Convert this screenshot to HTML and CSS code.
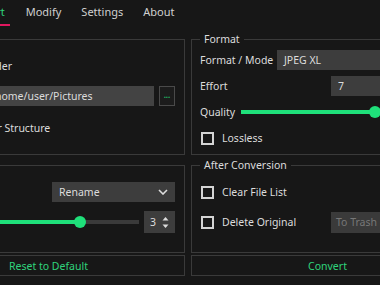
FILE: index.html
```html
<!DOCTYPE html>
<html lang="en">
<head>
    <meta charset="UTF-8">
    <meta name="viewport" content="width=device-width, initial-scale=1.0">
    <title>XL Converter</title>
    <link rel="stylesheet" href="styles.css">
</head>
<body>
    <div class="window">
        <nav class="tabs">
            <span class="tab active">Convert</span>
            <span class="tab">Modify</span>
            <span class="tab">Settings</span>
            <span class="tab">About</span>
        </nav>

        <div class="grid">
            <fieldset class="group output">
                <legend>Output</legend>
                <div class="row folder"><span class="box"></span>Custom Folder</div>
                <div class="row path-row">
                    <div class="field path">/home/user/Pictures</div>
                    <button class="dots">...</button>
                </div>
                <div class="row keep"><span class="box"></span>Keep Folder Structure</div>
            </fieldset>

            <fieldset class="group format">
                <legend>Format</legend>
                <div class="row">
                    <span class="label mode-label">Format / Mode</span>
                    <div class="field grow">JPEG XL</div>
                </div>
                <div class="row">
                    <span class="label">Effort</span>
                    <div class="field spin-wide">7</div>
                </div>
                <div class="row">
                    <span class="label quality-label">Quality</span>
                    <div class="slider">
                        <div class="fill" style="width: 63%"></div>
                        <div class="knob"></div>
                        <div class="rest"></div>
                    </div>
                </div>
                <div class="row"><span class="box"></span>Lossless</div>
            </fieldset>

            <fieldset class="group misc">
                <legend>Misc</legend>
                <div class="row">
                    <span class="label">Duplicates</span>
                    <div class="field combo">
                        Rename
                        <svg class="chevron" width="10" height="6" viewBox="0 0 10 6"><polyline points="1,1 5,5 9,1" fill="none" stroke="#dcdcdc" stroke-width="1.6"/></svg>
                    </div>
                </div>
                <div class="row">
                    <span class="label threads-label">Threads</span>
                    <div class="slider">
                        <div class="fill" style="width: 62%"></div>
                        <div class="knob"></div>
                        <div class="rest"></div>
                    </div>
                    <div class="field spin">
                        3
                        <svg class="arrows" width="7" height="13" viewBox="0 0 7 13"><polygon points="3.5,1 6.5,4.5 0.5,4.5" fill="#dcdcdc"/><polygon points="0.5,8.5 6.5,8.5 3.5,12" fill="#dcdcdc"/></svg>
                    </div>
                </div>
            </fieldset>

            <fieldset class="group after">
                <legend>After Conversion</legend>
                <div class="row"><span class="box"></span>Clear File List</div>
                <div class="row">
                    <span class="box"></span>Delete Original
                    <div class="field disabled">To Trash</div>
                </div>
            </fieldset>

            <button class="action">Reset to Default</button>
            <button class="action">Convert</button>
        </div>
    </div>
</body>
</html>
```

FILE: styles.css
```css
body {
    margin: 0;
    background: #171717;
    color: #dcdcdc;
    font-family: "Noto Sans", "DejaVu Sans", sans-serif;
    font-size: 10.5px;
    overflow: hidden;
}

.window {
    width: 552px;
    margin-left: -88px;
}

.tabs {
    display: flex;
    height: 26px;
    padding-left: 42px;
}

.tab {
    margin: 0 8px;
    padding: 0 2px;
    font-size: 11px;
    line-height: 24px;
    color: #d0d0d0;
    border-bottom: 2px solid transparent;
}

.tab.active {
    margin-right: 6px;
    padding-right: 5px;
    color: #2fd47c;
    border-bottom-color: #e0175f;
}

.grid {
    display: grid;
    grid-template-columns: 273px 273px;
    grid-template-rows: 124px 96px 21px;
    column-gap: 6px;
    row-gap: 2px;
    margin-top: 5px;
}

.group {
    margin: 0;
    min-width: 0;
    border: 1px solid #3a3a3a;
    display: flex;
    flex-direction: column;
    gap: 6px;
    padding: 3px 9px 5px 8px;
}

.group legend {
    padding: 0 4px;
    line-height: 16px;
    color: #dcdcdc;
}

.output,
.misc,
.after {
    padding-top: 9px;
    gap: 10px;
}

.folder {
    margin-left: -3px;
}

.keep {
    margin-top: 2px;
}

.row {
    display: flex;
    align-items: center;
    height: 20px;
}

.box {
    width: 13px;
    height: 13px;
    box-sizing: border-box;
    border: 2px solid #d4d4d4;
    margin: 0 8px 0 1px;
    flex-shrink: 0;
}

.label {
    flex-shrink: 0;
}

.mode-label {
    width: 77px;
}

.quality-label {
    width: 41px;
}

.misc .label {
    width: 131px;
}

.misc .threads-label {
    width: 63px;
}

.field {
    height: 20px;
    line-height: 20px;
    background: #3d3d3d;
    padding: 0 7px;
    box-sizing: border-box;
    white-space: nowrap;
}

.grow {
    flex: 1;
}

.spin-wide {
    width: 123px;
    margin-left: auto;
}

.path-row {
    padding-left: 63px;
    gap: 5px;
}

.path {
    flex: 1;
    background: #434343;
}

.dots {
    width: 16px;
    height: 20px;
    padding: 0 0 3px;
    background: #1c1c1c;
    border: 1px solid #4a4a4a;
    color: #22b466;
    font-size: 8px;
    font-weight: bold;
    font-family: inherit;
}

.combo {
    flex: 1;
    display: flex;
    align-items: center;
    justify-content: space-between;
}

.spin {
    width: 31px;
    height: 22px;
    line-height: 22px;
    margin-left: 5px;
    padding: 0 6px;
    display: flex;
    align-items: center;
    justify-content: space-between;
}

.slider {
    flex: 1;
    display: flex;
    align-items: center;
    height: 14px;
}

.fill {
    height: 4px;
    background: #1fe07a;
}

.knob {
    width: 12px;
    height: 12px;
    margin: 0 -6px;
    border-radius: 50%;
    background: #1fe07a;
    position: relative;
}

.rest {
    flex: 1;
    height: 4px;
    background: #3a3a3a;
}

.disabled {
    margin-left: auto;
    width: 123px;
    height: 21px;
    line-height: 21px;
    padding: 0 5px;
    background: #3a3a3a;
    color: #777;
}

.action {
    height: 21px;
    padding: 0;
    background: transparent;
    border: 1px solid #3a3a3a;
    color: #2fd47c;
    font-family: inherit;
    font-size: 10.5px;
}
```
